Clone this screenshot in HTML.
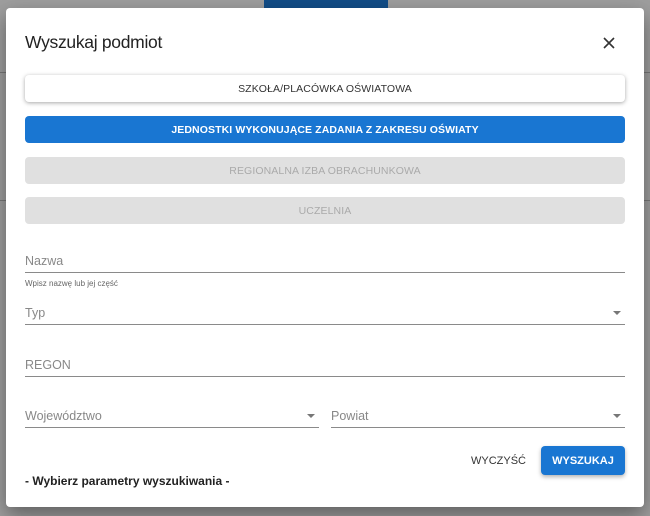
<!DOCTYPE html>
<html><head><meta charset="utf-8"><style>
*{box-sizing:border-box;margin:0;padding:0}
body{width:650px;height:516px;background:#9e9e9e;font-family:"Liberation Sans",sans-serif;position:relative;overflow:hidden}
.bg1{position:absolute;left:264px;top:0;width:124px;height:10px;background:#124d87}
.bgl{position:absolute;left:0;width:650px;height:1px;background:#777}
.dlg{position:absolute;left:6px;top:8px;width:638px;height:499px;background:#fff;border-radius:4px;box-shadow:0 8px 20px rgba(0,0,0,.4)}
.t{position:absolute;left:19px;top:24px;font-size:17.5px;color:#222;letter-spacing:-.3px}
.x{position:absolute;left:596px;top:28px}
.btn{position:absolute;left:19px;width:600px;height:27px;border-radius:4px;font-size:10.5px;text-align:center;line-height:28px;letter-spacing:.1px}
.b1{top:67px;background:#fff;color:#333;box-shadow:0 1px 4px rgba(0,0,0,.35)}
.b2{top:108px;background:#1976d2;color:#fff;font-weight:bold}
.b3{top:149px;background:#e0e0e0;color:#aaa}
.b4{top:189px;background:#e0e0e0;color:#aaa}
.f{position:absolute;border-bottom:1px solid #8a8a8a;height:23px;padding-top:4px;font-size:12.5px;color:#888}
.arr{position:absolute;right:4px;top:9px;width:0;height:0;border-left:4px solid transparent;border-right:4px solid transparent;border-top:4px solid #777}
.hint{position:absolute;left:19px;top:271px;font-size:8px;color:#666}
.wy{position:absolute;left:465px;top:447px;font-size:11px;color:#333}
.sz{position:absolute;left:535px;top:438px;width:84px;height:29px;background:#1976d2;color:#fff;font-weight:bold;font-size:11px;text-align:center;line-height:30px;border-radius:4px;box-shadow:0 2px 4px rgba(0,0,0,.3)}
.wb{position:absolute;left:19px;top:466px;font-size:12px;font-weight:bold;color:#222}
</style></head><body>
<div class="bg1"></div>
<div class="bgl" style="top:72px"></div>
<div class="bgl" style="top:200px"></div>
<div class="dlg">
<div class="t">Wyszukaj podmiot</div>
<svg class="x" width="14" height="14" viewBox="0 0 14 14"><path d="M2 2L12 12M12 2L2 12" stroke="#333" stroke-width="1.6"/></svg>
<div class="btn b1">SZKOŁA/PLACÓWKA OŚWIATOWA</div>
<div class="btn b2">JEDNOSTKI WYKONUJĄCE ZADANIA Z ZAKRESU OŚWIATY</div>
<div class="btn b3">REGIONALNA IZBA OBRACHUNKOWA</div>
<div class="btn b4">UCZELNIA</div>
<div class="f" style="left:19px;top:242px;width:600px">Nazwa</div>
<div class="hint">Wpisz nazwę lub jej część</div>
<div class="f" style="left:19px;top:294px;width:600px">Typ<div class="arr"></div></div>
<div class="f" style="left:19px;top:346px;width:600px">REGON</div>
<div class="f" style="left:19px;top:397px;width:294px">Województwo<div class="arr"></div></div>
<div class="f" style="left:325px;top:397px;width:294px">Powiat<div class="arr"></div></div>
<div class="wy">WYCZYŚĆ</div>
<div class="sz">WYSZUKAJ</div>
<div class="wb">- Wybierz parametry wyszukiwania -</div>
</div>
</body></html>
